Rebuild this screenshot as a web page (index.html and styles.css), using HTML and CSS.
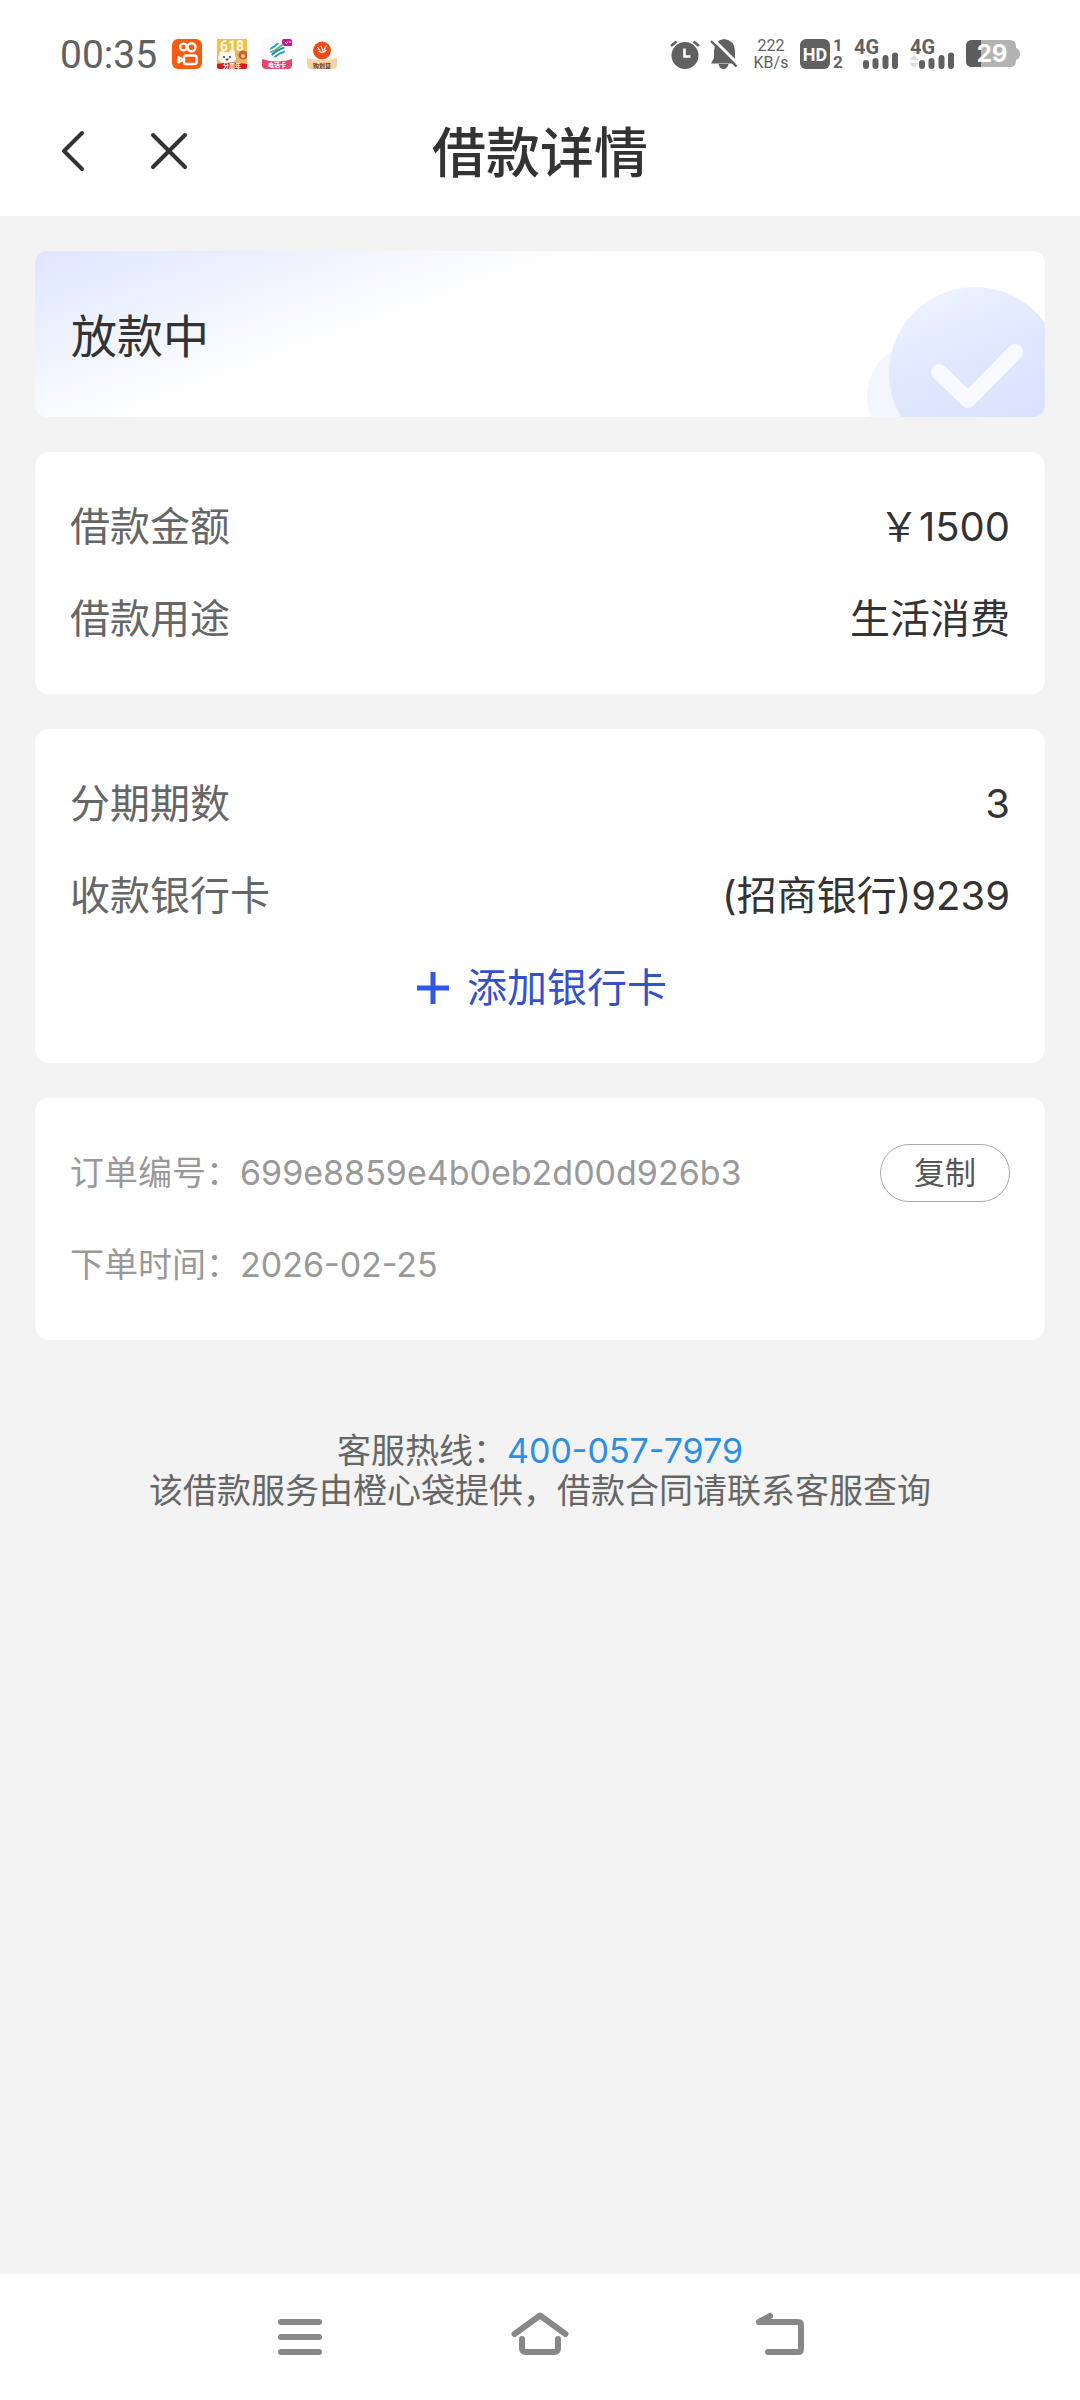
FILE: index.html
```html
<!DOCTYPE html>
<html lang="zh-CN">
<head>
<meta charset="utf-8">
<meta name="viewport" content="width=device-width, initial-scale=1">
<title>借款详情</title>
<link rel="stylesheet" href="styles.css">
</head>
<body>

<!-- phone status bar -->
<div class="statusbar">
  <div class="status-left">
    <span class="clock">00:35</span>
    <svg width="30" height="30" viewBox="0 0 30 30">
      <rect width="30" height="30" rx="6" fill="#fb5a12"/>
      <g fill="none" stroke="#fff" stroke-width="2.4">
        <circle cx="11.5" cy="8" r="3.4"/>
        <circle cx="19.5" cy="8.2" r="4"/>
        <rect x="12" y="16.5" width="12.5" height="8.5" rx="2"/>
        <path d="M11.500 20.800L6.500 18.300v5z" stroke-linejoin="round"/>
      </g>
    </svg>
    <svg width="30" height="30" viewBox="0 0 30 30">
      <rect width="30" height="30" rx="2" fill="#e9b565"/>
      <path d="M0 0h30v12H0z" fill="#efc04d"/>
      <text x="15" y="12" class="t618">618</text>
      <circle cx="5" cy="15" r="3" fill="#fff"/>
      <circle cx="15" cy="14" r="3" fill="#fff"/>
      <ellipse cx="10" cy="19" rx="9" ry="6" fill="#fffaf2"/>
      <circle cx="7" cy="18" r="1" fill="#333"/>
      <circle cx="13" cy="18" r="1" fill="#333"/>
      <ellipse cx="10" cy="20.500" rx="1.500" ry="1" fill="#333"/>
      <circle cx="26" cy="16" r="4.500" fill="#c8632b"/>
      <circle cx="26" cy="17" r="2" fill="#f3c58a"/>
      <path d="M0 25q15-3 30 0v3q0 2-2 2H2q-2 0-2-2z" fill="#c9201f"/>
      <text x="15" y="29" class="tiny light">分周年</text>
    </svg>
    <svg width="30" height="30" viewBox="0 0 30 30">
      <rect width="30" height="30" rx="4" fill="#fdfafc"/>
      <clipPath id="ball"><circle cx="15.500" cy="11.500" r="7.500"/></clipPath>
      <g clip-path="url(#ball)" fill="none" stroke-width="2">
        <path d="M6 10Q11 10 18 2" stroke="#27a4c9"/>
        <path d="M6 14Q13 13 22 4" stroke="#69b95a"/>
        <path d="M8 18Q14 11 24 8" stroke="#1d86c8"/>
        <path d="M11 20Q16 14 25 12" stroke="#27a4a9"/>
      </g>
      <path d="M20 2q0-2 2-2h6q2 0 2 2v5h-7q-3 0-3-3z" fill="#c5188c"/>
      <path d="M23 3l1.500 2L26 2.500M27 3h2" stroke="#fff" fill="none"/>
      <path d="M0 20q15 5 30 0v6q0 4-4 4H4q-4 0-4-4z" fill="#ec4468"/>
      <text x="15" y="28" class="tiny light">电话卡</text>
    </svg>
    <svg width="30" height="30" viewBox="0 0 30 30">
      <rect width="30" height="30" rx="4" fill="#fffdfb"/>
      <path d="M0 19q15 4 30 0v7q0 4-4 4H4q-4 0-4-4z" fill="#f9d3a5"/>
      <circle cx="15" cy="11.500" r="9" fill="#ee4b17"/>
      <path d="M10.500 8l2.500 3.500M14 7l2 5M19.500 6.500L17 11M11.500 12q4 3 8-1" stroke="#fff" stroke-width="1.200" fill="none"/>
      <text x="15" y="29" class="tiny dark">购划算</text>
    </svg>
  </div>

  <div class="status-right">
    <svg width="30" height="30" viewBox="0 0 30 30">
      <circle cx="15" cy="16.500" r="13.500" fill="#616161"/>
      <path d="M1 7l5.500-4.500M29 7l-5.500-4.500" stroke="#616161" stroke-width="2.600"/>
      <path d="M14.500 9.500v8h6" stroke="#fff" stroke-width="2.600" fill="none"/>
    </svg>
    <svg width="32" height="30" viewBox="0 0 32 30">
      <path d="M14 0q11 1.500 11 12v7l2 5.500H1L4 19v-7Q4 1.500 14 0z" fill="#616161"/>
      <path d="M8.500 25h10q-1 5-5 5t-5-5z" fill="#616161"/>
      <path d="M3 0l25 25" stroke="#fff" stroke-width="3"/>
      <path d="M1 2l25.500 25.500" stroke="#616161" stroke-width="2.400"/>
    </svg>
    <span class="speed">222<br>KB/s</span>
    <svg width="44" height="30" viewBox="0 0 44 30">
      <rect width="30" height="30" rx="6" fill="#616161"/>
      <text x="15" y="21.500" class="hd">HD</text>
      <text x="38" y="12" class="sim">1</text>
      <text x="38" y="29" class="sim">2</text>
    </svg>
    <svg width="46" height="30" viewBox="0 0 46 30">
      <text x="0" y="15" class="net">4G</text>
      <path d="M12 24v3M21.500 22v5M31.500 19v8M41 16.500v10.500" class="bars"/>
    </svg>
    <svg width="46" height="30" viewBox="0 0 46 30">
      <text x="0" y="15" class="net">4G</text>
      <path d="M4 16l4.500 5h-9zM4 29l4.500-5h-9z" fill="#ddd"/>
      <path d="M12 24v3M21.500 22v5M31.500 19v8M41 16.500v10.500" class="bars"/>
    </svg>
    <svg width="54" height="28" viewBox="0 0 54 28">
      <path d="M6 0h38q6 0 6 6v2q4 1 4 6t-4 6v1q0 6-6 6H6q-6 0-6-6V6q0-6 6-6z" fill="#b3b3b3"/>
      <path d="M6 0h9v27H6q-6 0-6-6V6q0-6 6-6z" fill="#5c5c5c"/>
      <text x="26" y="22" class="level">29</text>
    </svg>
  </div>
</div>

<!-- page header -->
<header class="topbar">
  <div class="topbar-buttons">
    <button type="button" class="iconbtn" aria-label="返回">
      <svg width="44" height="44" viewBox="0 0 44 44"><path d="M30 3L12 21l18 18"/></svg>
    </button>
    <button type="button" class="iconbtn" aria-label="关闭">
      <svg width="44" height="44" viewBox="0 0 44 44"><path d="M6 5l32 32M38 5L6 37"/></svg>
    </button>
  </div>
  <h1>借款详情</h1>
</header>

<main>
  <section class="banner">
    <span>放款中</span>
    <svg class="banner-art" width="178" height="167" viewBox="0 0 178 167">
      <defs>
        <linearGradient id="big" x1="0.2" y1="0" x2="0.6" y2="1">
          <stop offset="0" stop-color="#eef4ff"/>
          <stop offset="0.45" stop-color="#e1e7ff"/>
          <stop offset="1" stop-color="#d8e0ff"/>
        </linearGradient>
      </defs>
      <circle cx="55" cy="147" r="55" fill="#f3f5ff"/>
      <circle cx="108" cy="123" r="86" fill="url(#big)"/>
      <path d="M72 122l29 28 47-48" fill="none" stroke="#f8faff" stroke-width="16" stroke-linecap="round" stroke-linejoin="round"/>
    </svg>
  </section>

  <section class="card">
    <div class="row"><span class="label">借款金额</span><span>￥1500</span></div>
    <div class="row"><span class="label">借款用途</span><span>生活消费</span></div>
  </section>

  <section class="card">
    <div class="row"><span class="label">分期期数</span><span>3</span></div>
    <div class="row"><span class="label">收款银行卡</span><span>(招商银行)9239</span></div>
    <a href="#" class="row addcard">
      <svg width="40" height="40" viewBox="0 0 40 40"><path d="M20 4v32M4 20h32"/></svg>
      添加银行卡
    </a>
  </section>

  <section class="card order">
    <div class="row">
      <span>订单编号：699e8859e4b0eb2d00d926b3</span>
      <button type="button" class="copybtn">复制</button>
    </div>
    <div class="row"><span>下单时间：2026-02-25</span></div>
  </section>

  <footer>
    <p>客服热线：<a href="tel:400-057-7979">400-057-7979</a></p>
    <p>该借款服务由橙心袋提供，借款合同请联系客服查询</p>
  </footer>
</main>

<!-- system navigation -->
<nav class="sysnav">
  <div class="sysnav-inner">
    <button type="button" aria-label="菜单">
      <svg width="60" height="60" viewBox="0 0 60 60"><path d="M11 15h38M11 30h38M11 45h38"/></svg>
    </button>
    <button type="button" aria-label="主页">
      <svg width="60" height="60" viewBox="0 0 60 60"><path d="M4.500 27L30 8.500 55.500 27M12 32v9q0 4 4 4h28q4 0 4-4v-9"/></svg>
    </button>
    <button type="button" aria-label="后退">
      <svg width="60" height="60" viewBox="0 0 60 60"><path d="M20 9L9 15h39q3 0 3 3v24q0 3-3 3H18"/></svg>
    </button>
  </div>
</nav>

</body>
</html>
```

FILE: styles.css
```css
* {
  box-sizing: border-box;
}

body {
  margin: 0;
  min-height: 100vh;
  display: flex;
  flex-direction: column;
  background: #f3f3f3;
  color: #333;
  font-family: Inter, "Noto Sans CJK SC", sans-serif;
  font-size: 40px;
  line-height: 1.2;
}

button {
  font-family: inherit;
  line-height: inherit;
  border: none;
  background: none;
  padding: 0;
  cursor: pointer;
}

svg {
  display: block;
}

a {
  text-decoration: none;
}

/* status bar */
.statusbar {
  display: flex;
  justify-content: space-between;
  align-items: center;
  height: 108px;
  padding: 0 60px;
  background: #fff;
  color: #616161;
  font-family: Roboto, sans-serif;
}

.status-left, .status-right {
  display: flex;
  align-items: center;
  gap: 15px;
}

.status-right {
  gap: 10px;
}

.status-right svg {
  overflow: visible;
}

.clock {
  padding-top: 2px;
  font-size: 39px;
  line-height: 40px;
}

.speed {
  width: 38px;
  font-size: 16px;
  line-height: 17px;
  text-align: center;
}

.t618, .tiny, .hd, .sim, .level {
  text-anchor: middle;
}

.t618 {
  font-size: 14px;
  font-weight: 700;
  fill: #fff8dc;
}

.tiny {
  font-family: "Noto Sans CJK SC", sans-serif;
  font-size: 6px;
  font-weight: 700;
}

.light {
  fill: #fff;
}

.dark {
  fill: #6b3a1c;
}

.hd {
  font-size: 18px;
  font-weight: 700;
  fill: #fff;
}

.sim {
  font-size: 17px;
  font-weight: 700;
  fill: #616161;
}

.net {
  font-size: 20px;
  font-weight: 700;
  fill: #616161;
}

.bars {
  stroke: #616161;
  stroke-width: 6;
  stroke-linecap: round;
}

.level {
  font-family: Inter, sans-serif;
  font-size: 24px;
  font-weight: 700;
  fill: #fff;
}

/* header */
.topbar {
  display: grid;
  grid-template-columns: 1fr auto 1fr;
  align-items: center;
  height: 108px;
  padding: 0 52px 20px;
  background: #fff;
}

.topbar-buttons {
  display: flex;
  gap: 51px;
}

.iconbtn svg {
  fill: none;
  stroke: #333;
  stroke-width: 4;
  stroke-linecap: round;
  stroke-linejoin: round;
}

.topbar h1 {
  margin: 0;
  padding-top: 4px;
  font-size: 54px;
  line-height: 60px;
  font-weight: 500;
}

/* cards */
main {
  flex: 1;
  display: flex;
  flex-direction: column;
  gap: 35px;
  padding: 35px;
}

.banner {
  position: relative;
  overflow: hidden;
  height: 166px;
  padding: 6px 36px 0;
  display: flex;
  align-items: center;
  border-radius: 12px;
  background: linear-gradient(160deg, #e0e5ff 0%, #e8eeff 12%, #fff 38%);
  font-size: 46px;
}

.banner-art {
  position: absolute;
  right: 0;
  bottom: 0;
}

.card {
  padding: 29px 35px;
  border-radius: 14px;
  background: #fff;
}

.row {
  display: flex;
  justify-content: space-between;
  align-items: center;
  height: 92px;
}

.label {
  color: #666;
}

.addcard {
  justify-content: center;
  gap: 14px;
  color: #3451cc;
}

.addcard svg {
  stroke: #2f57ea;
  stroke-width: 5;
}

.order {
  color: #999;
  font-size: 34px;
}

.copybtn {
  width: 130px;
  height: 58px;
  border: 1px solid #aaa;
  border-radius: 29px;
  color: #555;
  font-size: 31px;
}

footer {
  margin-top: 56px;
  text-align: center;
  color: #666;
  font-size: 34px;
  line-height: 40px;
}

footer p {
  margin: 0;
}

footer a {
  color: #2b8fe6;
}

/* bottom system buttons */
.sysnav {
  background: #fff;
}

.sysnav-inner {
  display: flex;
  max-width: 720px;
  height: 126px;
  margin: 0 auto;
}

.sysnav button {
  flex: 1;
  display: flex;
  justify-content: center;
  align-items: center;
}

.sysnav svg {
  fill: none;
  stroke: #888;
  stroke-width: 6;
  stroke-linecap: round;
  stroke-linejoin: round;
}
```
